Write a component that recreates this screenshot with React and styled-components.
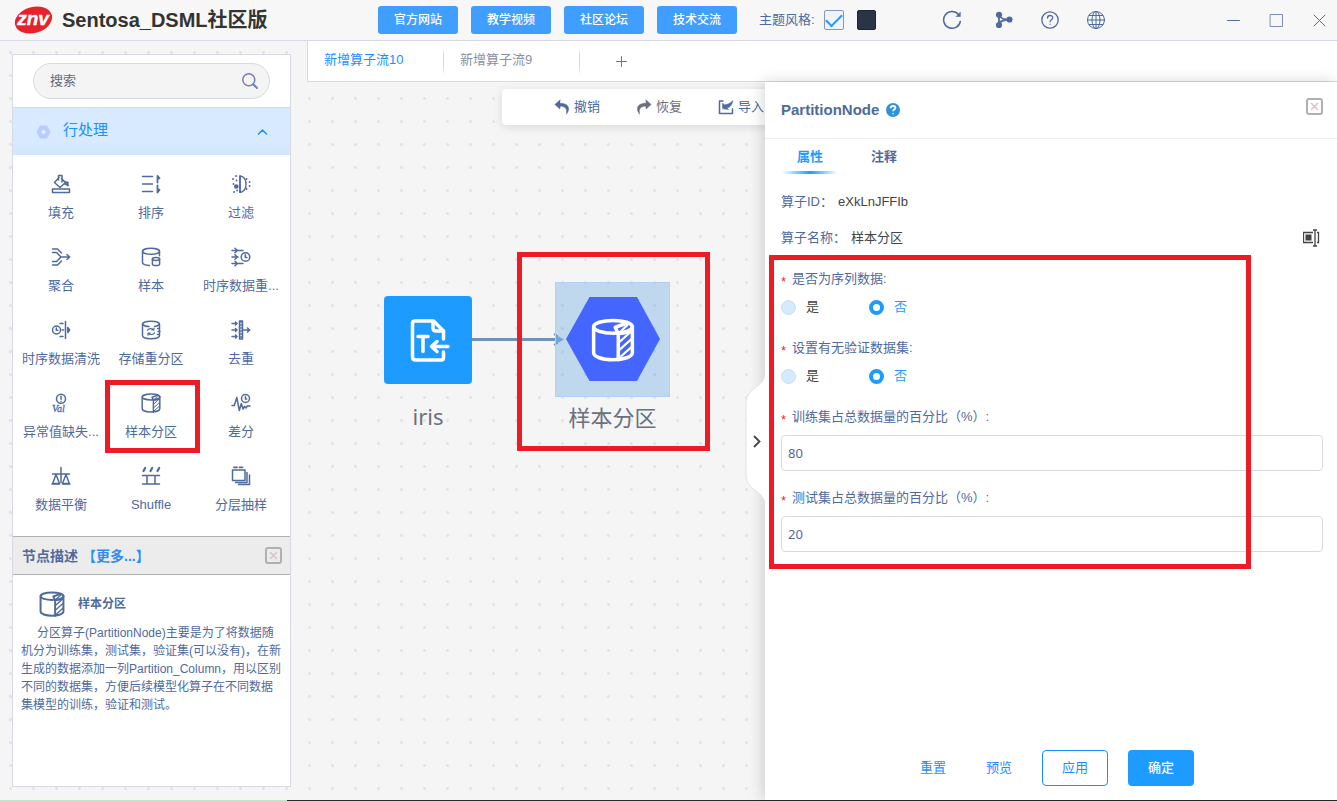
import React from "react";
import styled, { createGlobalStyle, css } from "styled-components";

const ink = "#4f6a9c";
const blue = "#1e9bff";
const line = "#d6dae4";
const red = "#ed1c24";
const sans = `"Liberation Sans", "Noto Sans CJK SC", sans-serif`;

const GlobalStyle = createGlobalStyle`
  * { box-sizing: border-box; }
  body { margin: 0; font: 13px/20px ${sans}; color: ${ink}; }
  button, input { font: inherit; color: inherit; margin: 0; }
  button { border: 0; padding: 0; background: none; cursor: pointer; }
  svg { display: block; flex: none; }
  h1, h2, h3, p { margin: 0; }
`;

const Page = styled.div`
  display: flex;
  flex-direction: column;
  height: 100vh;
  background: #f5f5f5;
  overflow: hidden;
`;

const Header = styled.header`
  display: flex;
  align-items: center;
  flex: none;
  height: 41px;
  padding: 0 10px 0 14px;
  background: #f7f7f7;
  border-bottom: 1px solid ${line};
`;

const Title = styled.h1`
  width: 316px;
  flex: none;
  margin-left: 9px;
  font-size: 20px;
  line-height: 28px;
  color: #333;
  white-space: nowrap;
`;

const HeaderLinks = styled.nav`
  display: flex;
  gap: 13px;
  margin-right: 22px;
`;

const LinkButton = styled.button`
  width: 80px;
  height: 28px;
  border-radius: 3px;
  background: #409eff;
  color: #fff;
  font-size: 12px;
  font-weight: 500;
`;

const ThemeLabel = styled.label`
  display: flex;
  align-items: center;
  gap: 9px;
  white-space: nowrap;
`;

const Check = styled.input`
  appearance: none;
  width: 20px;
  height: 20px;
  border: 1px solid #8a97b4;
  border-radius: 2px;
  background: #eef3fc;
  display: grid;
  place-items: center;
  &:checked::after {
    content: "";
    width: 14px;
    height: 7px;
    border: solid ${blue};
    border-width: 0 0 2px 2px;
    rotate: -45deg;
    translate: 0 -2px;
  }
`;

const Swatch = styled.button`
  width: 19px;
  height: 20px;
  margin: 0 66px 0 13px;
  border: 1px solid #1c2333;
  border-radius: 2px;
  background: #2b3346;
`;

const IconRow = styled.div`
  display: flex;
  align-items: center;
  gap: ${(p) => p.$gap}px;
  margin-left: ${(p) => (p.$end ? "auto" : "0")};
  margin-right: ${(p) => (p.$end ? 0 : 26)}px;
`;

const Body = styled.div`
  display: flex;
  flex: 1;
  min-height: 0;
  background: radial-gradient(circle, #e3e3e3 1px, transparent 2px) -1px 0 / 23px 23px;
`;

const Aside = styled.aside`
  display: flex;
  flex: none;
  width: 307px;
  padding: 13px 16px 13px 12px;
`;

const Palette = styled.div`
  display: flex;
  flex-direction: column;
  width: 100%;
  background: #fff;
  border: 1px solid ${line};
`;

const Search = styled.label`
  display: flex;
  align-items: center;
  height: 36px;
  margin: 8px 20px;
  padding: 0 11px 0 16px;
  border: 1px solid ${line};
  border-radius: 18px;
  background: #f4f4f4;
`;

const SearchInput = styled.input`
  flex: 1;
  min-width: 0;
  border: 0;
  padding: 0;
  background: none;
  outline: 0;
  &::placeholder { color: #666b7a; opacity: 1; }
`;

const Category = styled.button`
  display: flex;
  align-items: center;
  gap: 12px;
  height: 48px;
  padding: 0 22px 0 23px;
  border-top: 1px solid ${line};
  background: linear-gradient(#d8eaff 70%, #d2e7fc);
  color: #1890ff;
  font-size: 15px;
  text-align: left;
`;

const CategoryName = styled.span`
  flex: 1;
  padding-bottom: 4px;
`;

const Grow = styled.span`
  flex: 1;
`;

const ToolGrid = styled.div`
  display: grid;
  grid-template-columns: repeat(3, 1fr);
  row-gap: 25px;
  padding: 19px 4px 22px 3px;
`;

const ToolItem = styled.button`
  position: relative;
  display: flex;
  flex-direction: column;
  align-items: center;
  gap: 10px;
  line-height: 18px;
  white-space: nowrap;
`;

const Mark = styled.span`
  position: absolute;
  inset: ${(p) => p.$inset};
  border: 5px solid ${red};
  pointer-events: none;
`;

const DescHead = styled.div`
  display: flex;
  align-items: center;
  height: 39px;
  padding: 0 8px 0 9px;
  border: solid #b0b0b0;
  border-width: 1px 0;
  background: #ececec;
  font-size: 14px;
  font-weight: 700;
`;

const More = styled.a`
  color: #2d8cf0;
  margin-left: 4px;
  text-decoration: none;
`;

const DescTitle = styled.h3`
  display: flex;
  align-items: center;
  gap: 13px;
  height: 26px;
  margin: 16px 0 7px 26px;
  font-size: 12px;
`;

const DescText = styled.p`
  padding: 0 7px 0 8px;
  font-size: 12px;
  line-height: 18px;
  text-indent: 16px;
`;

const Main = styled.main`
  display: flex;
  flex-direction: column;
  flex: 1;
  min-width: 0;
`;

const FlowTabs = styled.nav`
  display: flex;
  flex: none;
  height: 41px;
  background: #fff;
  border: solid ${line};
  border-width: 0 0 1px 1px;
`;

const FlowTab = styled.button`
  width: 136px;
  padding: 0 16px 2px;
  text-align: left;
  color: ${(p) => (p.$active ? "#1890ff" : "#8a8fa3")};
  background: linear-gradient(transparent, ${line} 30%, ${line} 70%, transparent) right 5px / 1px 30px no-repeat;
`;

const AddTab = styled.button`
  display: grid;
  place-items: center;
  width: 82px;
`;

const Work = styled.div`
  display: flex;
  flex: 1;
  min-height: 0;
`;

const Canvas = styled.section`
  position: relative;
  flex: 1;
  min-width: 0;
  overflow: hidden;
`;

const Toolbar = styled.div`
  display: flex;
  align-items: center;
  gap: 36px;
  width: 100%;
  height: 36px;
  margin: 7px 0 0 195px;
  padding-left: 52px;
  border-radius: 4px;
  background: #fff;
  box-shadow: 0 2px 10px rgba(0, 0, 0, 0.12);
`;

const ToolbarButton = styled.button`
  display: flex;
  align-items: center;
  gap: 4px;
  flex: none;
  color: ${(p) => (p.$muted ? "#6b6f80" : ink)};
`;

const Node = styled.div`
  position: absolute;
  left: ${(p) => p.$x}px;
  top: ${(p) => p.$y}px;
  display: flex;
  flex-direction: column;
  align-items: center;
  gap: ${(p) => p.$gap}px;
  font: 22px/28px "Noto Sans", "Noto Sans CJK SC", sans-serif;
  color: #6b6f80;
`;

const NodeTile = styled.div`
  display: grid;
  place-items: center;
  ${(p) =>
    p.$selected
      ? css`
          width: 115px;
          height: 115px;
          border: 1px solid #b3d0fb;
          background: rgba(31, 130, 220, 0.25);
        `
      : css`
          width: 88px;
          height: 88px;
          border-radius: 4px;
          background: ${blue};
          color: #fff;
        `}
`;

const Edge = styled.svg`
  position: absolute;
  left: 165px;
  top: 250px;
`;

const Panel = styled.section`
  position: relative;
  display: flex;
  flex-direction: column;
  flex: none;
  width: 572px;
  background: #fff;
  box-shadow: -2px 0 14px rgba(0, 0, 0, 0.16);
`;

const Handle = styled.button`
  position: absolute;
  left: -20px;
  top: 291px;
`;

const PanelHead = styled.div`
  display: flex;
  align-items: flex-start;
  height: 57px;
  padding: 16px 14px 0 16px;
  border-bottom: 1px solid #ebedf0;
`;

const PanelTitle = styled.h2`
  display: flex;
  align-items: center;
  gap: 6px;
  flex: 1;
  font-size: 15px;
  line-height: 24px;
`;

const PanelTabs = styled.div`
  display: flex;
  gap: 18px;
  padding-left: 17px;
`;

const PanelTab = styled.button`
  width: 56px;
  height: 35px;
  font-weight: 700;
  color: ${(p) => (p.$active ? blue : ink)};
  background: ${(p) =>
    p.$active
      ? `linear-gradient(90deg, transparent, ${blue} 50%, transparent) bottom / 100% 3px no-repeat`
      : "none"};
`;

const Form = styled.form`
  position: relative;
  display: flex;
  flex-direction: column;
  flex: 1;
  padding: 18px 14px 0 16px;
`;

const FormMark = styled(Mark)`
  height: 314px;
`;

const Info = styled.div`
  display: flex;
  align-items: center;
  gap: 5px;
  height: 20px;
  margin-bottom: ${(p) => (p.$last ? 21 : 16)}px;
`;

const InfoValue = styled.span`
  flex: 1;
  color: #444;
`;

const RadioGroup = styled.fieldset`
  margin: 0 0 21px;
  padding: 0;
  border: 0;
  min-width: 0;
`;

const GroupLabel = styled.legend`
  display: flex;
  height: 20px;
  margin-bottom: 8px;
  padding: 0;
`;

const Field = styled.div`
  margin-bottom: 17px;
`;

const FieldLabel = styled.label`
  display: flex;
  height: 20px;
  margin-bottom: 8px;
`;

const Star = styled.span`
  width: 11px;
  line-height: 26px;
  color: #f5222d;
`;

const Radios = styled.div`
  display: flex;
`;

const RadioLabel = styled.label`
  display: flex;
  align-items: center;
  gap: 10px;
  width: 88px;
  color: ${(p) => (p.$on ? blue : "#444")};
`;

const Radio = styled.input`
  appearance: none;
  width: 15px;
  height: 15px;
  border: 1px solid #cfdcec;
  border-radius: 50%;
  background: #d6eaff;
  &:checked {
    border: 4px solid ${blue};
    background: #fff;
  }
`;

const TextInput = styled.input`
  display: block;
  width: 100%;
  height: 36px;
  padding: 0 6px;
  border: 1px solid ${line};
  border-radius: 4px;
  background: #fff;
  font-family: "Noto Sans", sans-serif;
`;

const Footer = styled.div`
  display: flex;
  justify-content: flex-end;
  padding: 0 143px 14px 0;
`;

const ActionGroup = styled.div`
  display: flex;
  gap: ${(p) => p.$gap}px;
  margin-left: 10px;
`;

const Action = styled.button`
  width: 66px;
  height: 36px;
  border-radius: 4px;
  color: ${(p) => (p.$kind === "fill" ? "#fff" : "#1890ff")};
  background: ${(p) => (p.$kind === "fill" ? blue : "none")};
  border: ${(p) => (p.$kind === "line" ? "1px solid #1890ff" : "0")};
  font-weight: ${(p) => (p.$kind === "fill" ? 500 : 400)};
`;

const BottomLine = styled.div`
  flex: none;
  height: 1px;
  background: linear-gradient(90deg, #bfe6cd 287px, #2a2a2a 287px);
`;

function Icon({ size = 20, box = 20, width = 1.5, children }) {
  return (
    <svg
      width={size}
      height={size}
      viewBox={`0 0 ${box} ${box}`}
      fill="none"
      stroke="currentColor"
      strokeWidth={width}
      strokeLinecap="round"
      strokeLinejoin="round"
      aria-hidden="true"
    >
      {children}
    </svg>
  );
}

const PartitionShape = () => (
  <>
    <ellipse cx="10" cy="4" rx="8.8" ry="2.9" />
    <path d="M1.2 4v11.8c0 1.8 3.8 3.2 8.8 3.2s8.8-1.4 8.8-3.2V4" />
    <path d="M12.4 19V7.2L11 4.2l5.2-1.8M12.4 7.2c3.6-.3 6.4-1.4 6.4-3.2" />
    <path d="M13 6.6l3.6-3.4M12.8 11l5.8-5.2M12.8 14.6l5.8-5.2M12.8 18.2l5.8-5.2" strokeWidth="1" />
  </>
);

const tools = [
  ["填充", <>
    <path d="M1.5 15h17v3.600h-17z" />
    <path d="M8 3.500l-4.500 5 5.500 5 5.500-5-4-4M7.500 6V1.500h3.500V8M13 7.500l4 1-.5 2.500-2.500-1" />
    <path d="M15.500 9.500l1.500 2" strokeWidth="2" />
  </>],
  ["排序", <>
    <path d="M1.500 2.500h10M1.500 10h10M1.500 17.500h10" />
    <path d="M16.500 8.500V1.800l2 2.500h-2M16.500 11.500v7l2-2.800h-2" strokeWidth="1.800" />
  </>],
  ["过滤", <>
    <path d="M9 2v16.500M9 2c4 .5 6 3.500 6 8s-2 8-6 8.300" strokeDasharray="3 1.200" />
    <path d="M9 2v16.500" />
    <path d="M5 2h.1M2 5h.1M5.500 6.500h.1M2.500 10h.1M3 18h.1M6 16.500h.1M18.500 8h.1M18.500 12h.1M15.500 5h.1M15.500 15h.1" strokeWidth="1.800" />
    <circle cx="5.300" cy="12.500" r="1.600" fill="currentColor" />
  </>],
  ["聚合", <>
    <path d="M1.500 2h5l4 4M1.500 5.500h4L10 10l-4.500 4.500h-4M1.500 18h5l4-4M10 10h8.500M16 7.500l2.700 2.500-2.700 2.500" />
  </>],
  ["样本", <>
    <ellipse cx="10" cy="4.300" rx="8.500" ry="3" />
    <path d="M1.500 4.300v11.200c0 1.500 3 2.700 7 3M18.500 4.300v4.500" />
    <ellipse cx="15" cy="12" rx="3.600" ry="1.500" />
    <path d="M11.400 12v5c0 .9 1.600 1.600 3.600 1.600s3.600-.7 3.600-1.600v-5" />
  </>],
  ["时序数据重...", <>
    <path d="M1 3.500h11M1 10h6M1 16.500h11M4 1.300l2.500 2.200L4 5.700M4 7.800L6.500 10 4 12.200M4 14.300l2.500 2.200L4 18.700" />
    <circle cx="14.500" cy="10" r="4.300" />
    <path d="M14.300 7.800V10.500h1.500" />
  </>],
  ["时序数据清洗", <>
    <circle cx="5.500" cy="10" r="4" />
    <path d="M5.300 8v2.300h1.500M14.500 1.500v17M9 3.500h3M11 10h1.500M9 16.500h3M16.800 7.500l1.800 2.500-1.800 2.500z" />
  </>],
  ["存储重分区", <>
    <path d="M1.500 4.200c0-1.600 3.500-2.900 8.500-2.900s8.500 1.300 8.500 2.900v11.600c0 1.600-3.500 2.900-8.500 2.900s-8.500-1.300-8.500-2.900zM1.500 4.200C3 6 6 6.500 8 6.500M18.500 4.200c-1 1.300-3 2-5 2.200M16.500 8.500h2M17 11.500h2M16.500 14.500h2" />
    <path d="M6.500 10.300c.6-1.800 4.500-2.600 6.300-.3M13.500 12.700c-.7 2-4.700 2.600-6.400.4M12.900 8v2h-2M7 15.200v-2h2" strokeWidth="1.200" />
  </>],
  ["去重", <>
    <path d="M8.500 1h3v18h-3z" />
    <path d="M10 1.500v17" strokeDasharray="1 2" />
    <path d="M1 3.500h5M1 10h5M1 16.500h5M4.500 2L6 3.500 4.500 5M4.500 8.500L6 10l-1.500 1.500M4.500 15L6 16.500 4.500 18M12 10h6.500M16.500 8l2.200 2-2.200 2" />
  </>],
  ["异常值缺失...", <>
    <circle cx="10" cy="5.800" r="4.500" />
    <path d="M10 3.300v3M10 8.200v.1" />
    <text x="1" y="18.500" fontFamily="Liberation Serif, serif" fontStyle="italic" fontSize="10" strokeWidth=".3" fill="currentColor">Val</text>
  </>],
  ["样本分区", <PartitionShape />, true],
  ["差分", <>
    <path d="M1 12.500h2.300l2.500-8 2.500 13 2-7 1.700 5.500 1.500-2.500 1.500 1.500 1.300-2H19" />
    <circle cx="14.500" cy="5.500" r="4" />
    <path d="M14.400 3.700v2.200h1.300" />
  </>],
  ["数据平衡", <>
    <path d="M10 1.500v15M1.500 8h17M5 8.500l-3.300 9h6.800zM15 8.500l-3.500 9h6.800z" />
    <path d="M1 18h7.500M11.500 18H19" />
  </>],
  ["Shuffle", <>
    <path d="M4.200 2L2.500 5M11.200 2L9.500 5M18.200 2l-1.700 3" strokeWidth="2.200" />
    <path d="M1.500 9.500h17M1.500 18h17M6 9.500V18M14 9.500V18" />
  </>],
  ["分层抽样", <>
    <path d="M1.500 4h12.500v10.500H1.500zM16 6.500v10H4.500M18.500 9v9.500H7.500" />
    <path d="M3 1.300h3M8.500 1.300h3" strokeWidth="1.800" />
  </>],
];

function CloseBox() {
  return (
    <Icon size={17} box={17} width={1.6}>
      <rect x="1" y="1" width="15" height="15" rx="2" stroke="#b0b0b0" strokeWidth="2" />
      <path d="M5.500 5.500l6 6M11.500 5.500l-6 6" stroke="#d9c4c4" />
    </Icon>
  );
}

function RadioField({ label, name }) {
  return (
    <RadioGroup>
      <GroupLabel><Star>*</Star>{label}</GroupLabel>
      <Radios>
        <RadioLabel><Radio type="radio" name={name} />是</RadioLabel>
        <RadioLabel $on><Radio type="radio" name={name} defaultChecked />否</RadioLabel>
      </Radios>
    </RadioGroup>
  );
}

function TextField({ label, id, value }) {
  return (
    <Field>
      <FieldLabel htmlFor={id}><Star>*</Star>{label}</FieldLabel>
      <TextInput id={id} defaultValue={value} />
    </Field>
  );
}

export default function App() {
  return (
    <Page>
      <GlobalStyle />
      <Header>
        <svg width="39" height="30" viewBox="0 0 39 30" aria-hidden="true">
          <ellipse cx="19.500" cy="15" rx="19" ry="13" fill="#e8222b" transform="rotate(-16 19.500 15)" />
          <text x="19" y="20" textAnchor="middle" fill="#fff" stroke="#fff" strokeWidth=".4" fontFamily="Liberation Sans, sans-serif" fontWeight="700" fontStyle="italic" fontSize="19">znv</text>
        </svg>
        <Title>Sentosa_DSML社区版</Title>
        <HeaderLinks>
          {["官方网站", "教学视频", "社区论坛", "技术交流"].map((t) => (
            <LinkButton key={t}>{t}</LinkButton>
          ))}
        </HeaderLinks>
        <ThemeLabel>
          主题风格:
          <Check type="checkbox" defaultChecked />
        </ThemeLabel>
        <Swatch aria-label="深色" />
        <IconRow $gap={32}>
          <button aria-label="刷新">
            <Icon><path d="M18.300 11.500A8.400 8.400 0 1 1 16.500 4.500" /><path d="M18.300 2.500v4h-4z" fill="currentColor" strokeWidth=".6" /></Icon>
          </button>
          <button aria-label="分支">
            <Icon width={1.8}>
              <path d="M5 5v10c0-3 2-5 10-5.500M5 5c1 3 4 4.500 10 4.500" />
              <circle cx="5" cy="4.800" r="2.200" fill="currentColor" />
              <circle cx="5" cy="15" r="2.200" fill="currentColor" />
              <circle cx="15.500" cy="9.500" r="2.200" fill="currentColor" />
            </Icon>
          </button>
        </IconRow>
        <IconRow $gap={26}>
          <button aria-label="帮助">
            <Icon width={1.300}><circle cx="10" cy="10" r="8.200" /><path d="M7.500 8c0-3.300 5.200-3.300 5.200-.3 0 2-2.600 2-2.600 4M10.100 14.200v.1" /></Icon>
          </button>
          <button aria-label="语言">
            <Icon width={1}><circle cx="10" cy="10" r="8.500" /><ellipse cx="10" cy="10" rx="4" ry="8.500" /><path d="M10 1.500v17M1.500 10h17M3 5.500h14M3 14.500h14" /></Icon>
          </button>
        </IconRow>
        <IconRow $gap={28} $end>
          <button aria-label="最小化"><Icon size={15} box={15} width={1}><path d="M1.500 7.500h12" /></Icon></button>
          <button aria-label="最大化"><Icon size={15} box={15} width={1}><path d="M1.500 1.500h12v12h-12z" stroke="#7d8db3" /></Icon></button>
          <button aria-label="关闭"><Icon size={15} box={15} width={1}><path d="M2 2l11 11M13 2L2 13" /></Icon></button>
        </IconRow>
      </Header>

      <Body>
        <Aside>
          <Palette>
            <Search>
              <SearchInput type="search" placeholder="搜索" aria-label="搜索" />
              <Icon size={16} box={16}><circle cx="6.800" cy="6.800" r="6" stroke="#7081b5" /><path d="M11.200 11.200L15 15" stroke="#7081b5" strokeWidth="2" /></Icon>
            </Search>
            <Category>
              <svg width="15" height="14" viewBox="0 0 15 14" aria-hidden="true">
                <path d="M4 .5h7L14.500 7 11 13.500H4L.5 7z" fill="#b9ccff" /><circle cx="7.500" cy="7" r="2" fill="#eaf2ff" />
              </svg>
              <CategoryName>行处理</CategoryName>
              <Icon size={11} box={11}><path d="M1.500 8l4-4 4 4" /></Icon>
            </Category>
            <ToolGrid>
              {tools.map(([name, art, marked]) => (
                <ToolItem key={name}>
                  <Icon>{art}</Icon>
                  <span>{name}</span>
                  {marked && <Mark $inset="-13px -4px -12px -1px" />}
                </ToolItem>
              ))}
            </ToolGrid>
            <DescHead>
              节点描述
              <More href="#more">【更多...】</More>
              <Grow />
              <button aria-label="关闭描述"><CloseBox /></button>
            </DescHead>
            <DescTitle>
              <Icon size={26}><PartitionShape /></Icon>
              样本分区
            </DescTitle>
            <DescText>
              分区算子(PartitionNode)主要是为了将数据随机分为训练集，测试集，验证集(可以没有)，在新生成的数据添加一列Partition_Column，用以区别不同的数据集，方便后续模型化算子在不同数据集模型的训练，验证和测试。
            </DescText>
          </Palette>
        </Aside>

        <Main>
          <FlowTabs>
            <FlowTab $active>新增算子流10</FlowTab>
            <FlowTab>新增算子流9</FlowTab>
            <AddTab aria-label="新增">
              <Icon size={11} box={11} width={1}><path d="M.5 5.500h10M5.500.5v10" stroke="#777" /></Icon>
            </AddTab>
          </FlowTabs>
          <Work>
            <Canvas>
              <Toolbar>
                <ToolbarButton>
                  <Icon size={16} box={16} width={0.500}><path d="M6 1L.8 5.500 6 10V7.200c4.500-.2 7.500 1.800 6.500 8 4-5.500 2.500-11-6.500-11z" fill="currentColor" /></Icon>
                  撤销
                </ToolbarButton>
                <ToolbarButton $muted>
                  <Icon size={16} box={16} width={0.500}><path d="M10 1l5.200 4.500L10 10V7.200C5.500 7 2.500 9 3.500 15.200-.5 9.700 1 4.200 10 4.200z" fill="currentColor" /></Icon>
                  恢复
                </ToolbarButton>
                <ToolbarButton>
                  <Icon size={16} box={16}><path d="M5 2H1.500v12.500h13V10" /><path d="M4.500 9.500V4l1.800 1.800C9 5.800 12 4.500 15 1.500 14 6 12 8.500 9 9l1.500 1.500z" fill="currentColor" strokeWidth=".5" /></Icon>
                  导入
                </ToolbarButton>
              </Toolbar>
              <Edge width="96" height="16" viewBox="0 0 96 16" aria-hidden="true">
                <path d="M0 7.500h85" stroke="#7192b8" strokeWidth="3" />
                <path d="M82 2l3 2v7l-3 2" fill="none" stroke="#7192b8" strokeWidth="2" />
                <path d="M84 3l8 4.500-8 4.500z" fill="#8db2dc" />
              </Edge>
              <Node $x={77} $y={214} $gap={18}>
                <NodeTile>
                  <Icon size={44} box={44} width={3.5}>
                    <path d="M37.500 21v-8L27.500 3H9C7 3 6.500 4 6.500 5.500v33c0 2.500 1 3.500 3 3.500h26c1.500 0 2-1 2-2.500V34" />
                    <path d="M27 3.500V10c0 2 1 3 3 3h7.500M12 18.500h10M17 18.500V33.500M26 28.500h16M31 23.500l-5.500 5 5.500 5" />
                  </Icon>
                </NodeTile>
                iris
              </Node>
              <Node $x={248} $y={200} $gap={6}>
                <NodeTile $selected>
                  <svg width="94" height="85" viewBox="0 0 94 85" aria-hidden="true">
                    <path d="M23.500 0h47.500L94 42 71 84H23.500L0 42z" fill="#4466ff" />
                    <svg x="25" y="21" width="44" height="44" viewBox="0 0 20 20" fill="none" stroke="#fff" strokeWidth="1.600" strokeLinejoin="round" strokeLinecap="round">
                      <PartitionShape />
                    </svg>
                  </svg>
                </NodeTile>
                样本分区
                <Mark $inset="-30px -40px -20px -38px" />
              </Node>
            </Canvas>

            <Panel>
              <Handle aria-label="收起">
                <svg width="20" height="132" viewBox="0 0 20 132">
                  <path d="M20 0C20 15 1 13 1 30v72c0 17 19 15 19 30z" fill="#fff" />
                  <path d="M20 0C20 15 1 13 1 30v72c0 17 19 15 19 30" fill="none" stroke="#dfe1ea" />
                  <path d="M9 63l5.500 5.500L9 74" fill="none" stroke="#444" strokeWidth="1.800" />
                </svg>
              </Handle>
              <PanelHead>
                <PanelTitle>
                  PartitionNode
                  <svg width="16" height="16" viewBox="0 0 16 16" aria-hidden="true">
                    <circle cx="8" cy="8" r="7" fill="#2f93d8" />
                    <path d="M5.700 6.200c0-3 4.700-2.800 4.700-.2 0 1.600-2.300 1.600-2.300 3.200M8.100 11.200v1" fill="none" stroke="#fff" strokeWidth="1.800" />
                  </svg>
                </PanelTitle>
                <button aria-label="关闭"><CloseBox /></button>
              </PanelHead>
              <PanelTabs>
                <PanelTab $active>属性</PanelTab>
                <PanelTab>注释</PanelTab>
              </PanelTabs>
              <Form onSubmit={(e) => e.preventDefault()}>
                <Info>算子ID：<InfoValue>eXkLnJFFIb</InfoValue></Info>
                <Info $last>
                  算子名称：<InfoValue>样本分区</InfoValue>
                  <svg width="20" height="18" viewBox="0 0 20 18" fill="none" stroke="#444" aria-label="重命名">
                    <path d="M10 3.500H.5v10H10M14 3.500h1.500v10H14M12 1v16M10 1h4M10 17h4" strokeWidth="1.300" />
                    <rect x="3" y="6" width="5" height="5" fill="#444" />
                  </svg>
                </Info>
                <RadioField label="是否为序列数据:" name="sequence" />
                <RadioField label="设置有无验证数据集:" name="validation" />
                <TextField label="训练集占总数据量的百分比（%）:" id="train" value="80" />
                <TextField label="测试集占总数据量的百分比（%）:" id="test" value="20" />
                <FormMark $inset="81px 86px auto 4px" />
              </Form>
              <Footer>
                <ActionGroup $gap={0}>
                  <Action>重置</Action>
                  <Action>预览</Action>
                </ActionGroup>
                <ActionGroup $gap={20}>
                  <Action $kind="line">应用</Action>
                  <Action $kind="fill">确定</Action>
                </ActionGroup>
              </Footer>
            </Panel>
          </Work>
        </Main>
      </Body>
      <BottomLine />
    </Page>
  );
}
